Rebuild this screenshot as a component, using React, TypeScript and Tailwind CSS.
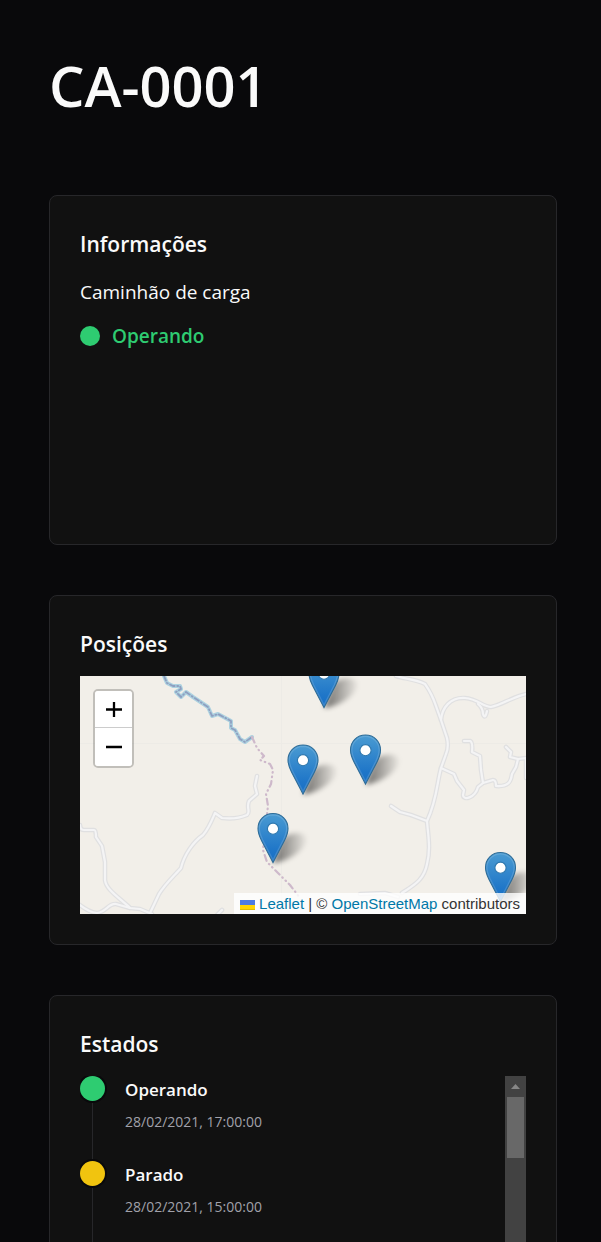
import type { ReactNode } from "react";

const roads = [
  "M396 676C405 679 415 679 425 684C430 691 434 700 436 706L441 720L447 738Q449 747 446 754L441 768C437 782 437 800 427 821C428 835 431 848 427 864C424 880 414 885 402 893",
  "M441 720C442 708 450 697 465 698C478 699 483 707 491 707C502 705 512 697 526 694",
  "M478 704Q483 708 483 714Q485 720 487 711",
  "M464 741H470Q473 742 472 752L480 756L481 770L483 783L478 787C475 798 463 801 463 795L464 790L457 781L454 774L441 768",
  "M483 783L493 780Q496 780 496 786C508 787 511 782 512 774L516 767L518 759",
  "M506 747L511 752L510 757L518 759L526 758V778",
  "M391 806L400 812L411 815L427 821",
  "M360 894L385 893L398 897",
  "M80 825Q80 830 84 830H94Q96 830 96 837L102 846L105 862V880C106 890 120 898 130 908L140 909L152 914",
  "M80 905Q89 912 97 913C107 912 108 903 116 904L130 908",
  "M150 913L159 894C165 884 175 875 181 868C184 855 193 842 203 835C209 828 212 820 215 813L222 818C230 819 240 818 247 815C251 812 246 808 249 801L257 794L255 786L257 776",
  "M216 916L222 910",
];

const river =
  "M164 676L167 683L173 686L180 686L181 689L176 692L181 697L186 692L193 697L208 707L212 716L218 714L231 721V728L235 730L240 739L245 742L252 737";
const boundary =
  "M252 737L257 748L264 756L260 760L270 764L273 770L271 784L266 794L268 806L265 830L263 850L267 862L278 873L290 885L300 898";

const markers = [
  { x: 324, y: 708 },
  { x: 365.5, y: 784.5 },
  { x: 303, y: 794.5 },
  { x: 273, y: 863 },
  { x: 500.5, y: 902 },
];

function MapCanvas() {
  return (
    <svg
      viewBox="80 676 446 238"
      preserveAspectRatio="xMidYMid slice"
      className="block h-full w-full"
      role="img"
      aria-label="Mapa de posições"
    >
      <defs>
        <linearGradient id="pin" x1="0" y1="0" x2="0" y2="1">
          <stop offset="0" stopColor="#4a9bd2" />
          <stop offset="0.75" stopColor="#1f76c8" />
          <stop offset="1" stopColor="#166fc6" />
        </linearGradient>
        <linearGradient id="shade" x1="0" y1="0" x2="1" y2="0">
          <stop offset="0" stopColor="#000" stopOpacity="0.55" />
          <stop offset="0.5" stopColor="#000" stopOpacity="0.3" />
          <stop offset="1" stopColor="#000" stopOpacity="0.04" />
        </linearGradient>
        <filter id="soft" x="-40%" y="-40%" width="180%" height="180%" colorInterpolationFilters="sRGB">
          <feGaussianBlur stdDeviation="2.5" />
        </filter>
      </defs>
      <rect x="80" y="676" width="446" height="238" fill="#f2efe9" />
      <path d="M281.5 676V914M80 743.5H526" stroke="#edebe6" strokeWidth="1" />
      <g fill="none" strokeLinejoin="round" strokeLinecap="round">
        {roads.map((d) => (
          <path key={d} d={d} stroke="#e0e0e1" strokeWidth="4.6" />
        ))}
        {roads.map((d) => (
          <path key={d} d={d} stroke="#f4f4f5" strokeWidth="2.2" />
        ))}
        <path d={river} stroke="#add2e0" strokeWidth="4" />
        <path d={river} stroke="#8f9fc0" strokeWidth="1.8" strokeDasharray="5 2.5 1 2.5" />
        <path d={boundary} stroke="#ceb9cb" strokeWidth="2.2" strokeDasharray="6 4 0.5 4 0.5 4" />
      </g>
      {markers.map(({ x, y }) => (
        <path
          key={x}
          transform={`translate(${x} ${y})`}
          d="M0 0L8 -22C13 -32 36 -33 33 -21C29 -10 12 -1 0 0Z"
          fill="url(#shade)"
          filter="url(#soft)"
        />
      ))}
      {markers.map(({ x, y }) => (
        <g key={x} transform={`translate(${x} ${y})`}>
          <path
            d="M0 -49.5C-8.5 -49.5 -15 -43 -15 -34.5C-15 -30 -13.5 -26.5 -11.5 -22.5L0 -0.5L11.5 -22.5C13.5 -26.5 15 -30 15 -34.5C15 -43 8.5 -49.5 0 -49.5Z"
            fill="url(#pin)"
            stroke="#2e6c97"
            strokeWidth="1.1"
          />
          <path
            d="M0 -48.2C-7.7 -48.2 -13.7 -42 -13.7 -34.5C-13.7 -30 -12 -26.5 -10.3 -23L0 -3L10.3 -23C12 -26.5 13.7 -30 13.7 -34.5C13.7 -42 7.7 -48.2 0 -48.2Z"
            fill="none"
            stroke="#fff"
            strokeOpacity="0.14"
            strokeWidth="1.3"
          />
          <circle cy="-34.3" r="5.6" fill="#fff" stroke="#2e78ae" strokeWidth="1.1" />
        </g>
      ))}
    </svg>
  );
}

function Card({ title, children }: { title: string; children: ReactNode }) {
  return (
    <section className="flex h-[350px] flex-col rounded-lg border border-[#27272a] bg-[#111111] p-[30px]">
      <h2 className="mb-[13px] text-[21px] leading-[37px] font-semibold">{title}</h2>
      {children}
    </section>
  );
}

const states = [
  { name: "Operando", date: "28/02/2021, 17:00:00", dot: "bg-[#2ecc71]" },
  { name: "Parado", date: "28/02/2021, 15:00:00", dot: "bg-[#f1c40f]" },
];

export default function App() {
  return (
    <main className="min-h-screen bg-[#09090b] pt-12 pr-11 pb-[50px] pl-[49px] font-['Open_Sans','Noto_Sans',sans-serif] text-[#fafafa]">
      <h1 className="mb-[72px] text-[56px] leading-[75px] font-semibold">CA-0001</h1>
      <div className="flex flex-col gap-[50px]">
        <Card title="Informações">
          <p className="mb-[13px] text-[19px] leading-8">Caminhão de carga</p>
          <div className="flex items-center gap-3 text-[#2ecc71]">
            <span className="size-5 rounded-full bg-[#2ecc71]" />
            <span className="text-[19px] leading-[30px] font-semibold">Operando</span>
          </div>
        </Card>

        <Card title="Posições">
          <div className="relative min-h-0 flex-1 overflow-hidden font-['Liberation_Sans',Arial,sans-serif]">
            <MapCanvas />
            <div className="absolute top-[13px] left-[13px] flex flex-col overflow-hidden rounded-[5px] border-2 border-black/20 bg-clip-padding text-black">
              <button
                type="button"
                aria-label="Zoom in"
                className="flex h-[37px] w-[37px] items-center justify-center border-b border-[#cccccc] bg-white"
              >
                <svg viewBox="0 0 16 16" className="size-4">
                  <path d="M0 8.5H16M8 1V16" stroke="currentColor" strokeWidth="2.3" />
                </svg>
              </button>
              <button
                type="button"
                aria-label="Zoom out"
                className="flex h-[38px] w-[37px] items-center justify-center bg-white"
              >
                <svg viewBox="0 0 16 16" className="size-4">
                  <path d="M0 8H16" stroke="currentColor" strokeWidth="2.3" />
                </svg>
              </button>
            </div>
            <div className="absolute right-0 bottom-0 flex h-[21px] items-center bg-white/80 px-1.5 pt-0.5 text-[15px] whitespace-pre text-[#333333]">
              <a href="https://leafletjs.com" className="flex items-center gap-1 text-[#0078a8]">
                <svg viewBox="0 0 15 10" className="h-2.5 w-[15px]">
                  <path fill="#4c7be1" d="M0 0h15v5H0z" />
                  <path fill="#ffd500" d="M0 5h15v4H0z" />
                  <path fill="#e0bc00" d="M0 9h15v1H0z" />
                </svg>
                Leaflet
              </a>
              <span> | © </span>
              <a href="https://www.openstreetmap.org/copyright" className="text-[#0078a8]">
                OpenStreetMap
              </a>
              <span> contributors</span>
            </div>
          </div>
        </Card>

        <Card title="Estados">
          <div className="flex min-h-0 flex-1">
            <ol className="flex-1 overflow-hidden">
              {states.map(({ name, date, dot }) => (
                <li key={date} className="flex h-[85px] gap-5">
                  <div className="flex w-[25px] flex-col items-center">
                    <span
                      className={`size-[25px] shrink-0 rounded-full ring-2 ring-[#09090b] ${dot}`}
                    />
                    <span className="mt-0.5 w-px flex-1 bg-[#27272a]" />
                  </div>
                  <div className="flex flex-col gap-1.5">
                    <h3 className="text-[17px] leading-7 font-semibold">{name}</h3>
                    <time className="text-[14px] leading-6 text-[#a1a1aa]">{date}</time>
                  </div>
                </li>
              ))}
            </ol>
            <div aria-hidden="true" className="flex w-[21px] flex-col items-center bg-[#424242]">
              <div className="flex h-[21px] items-center">
                <svg viewBox="0 0 9 5" className="h-[5px] w-[9px]">
                  <path d="M4.5 0L9 5H0Z" fill="#868686" />
                </svg>
              </div>
              <div className="h-[61px] w-[17px] bg-[#686868]" />
            </div>
          </div>
        </Card>
      </div>
    </main>
  );
}
